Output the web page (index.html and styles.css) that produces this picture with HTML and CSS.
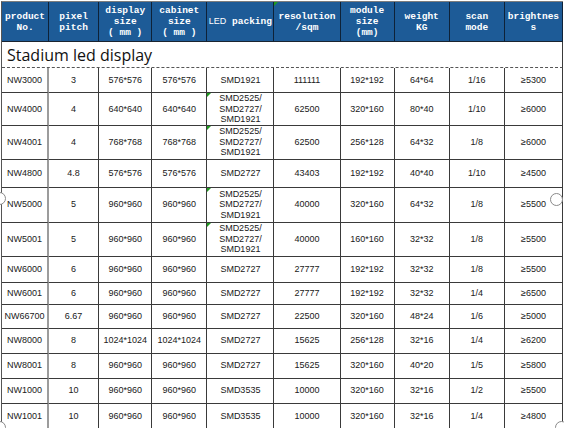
FILE: index.html
```html
<!DOCTYPE html>
<html>
<head>
<meta charset="utf-8">
<link rel="stylesheet" href="styles.css">
</head>
<body>
<div class="sheet">
<table class="spec">
  <colgroup>
    <col class="c1"><col class="c2"><col class="c3"><col class="c4"><col class="c5">
    <col class="c6"><col class="c7"><col class="c8"><col class="c9"><col class="c10">
  </colgroup>
  <thead>
    <tr class="r40">
      <th>product<br>No.</th>
      <th>pixel<br>pitch</th>
      <th>display<br>size<br>(&nbsp;mm&nbsp;)</th>
      <th>cabinet<br>size<br>(&nbsp;mm&nbsp;)</th>
      <th><span class="sans">LED</span> packing</th>
      <th class="tri">resolution<br>/sqm</th>
      <th>module<br>size<br>(mm)</th>
      <th>weight<br>KG</th>
      <th>scan<br>mode</th>
      <th>brightnes<br>s</th>
    </tr>
  </thead>
  <tbody>
    <tr class="r26 title"><td colspan="10">Stadium led display</td></tr>
    <tr class="r25"><td>NW3000</td><td>3</td><td>576*576</td><td>576*576</td><td>SMD1921</td><td>111111</td><td>192*192</td><td>64*64</td><td>1/16</td><td>≥5300</td></tr>
    <tr class="r31"><td>NW4000</td><td>4</td><td>640*640</td><td>640*640</td><td class="tri">SMD2525/<br>SMD2727/<br>SMD1921</td><td>62500</td><td>320*160</td><td>80*40</td><td>1/10</td><td>≥6000</td></tr>
    <tr class="r34"><td>NW4001</td><td>4</td><td>768*768</td><td>768*768</td><td class="tri">SMD2525/<br>SMD2727/<br>SMD1921</td><td>62500</td><td>256*128</td><td>64*32</td><td>1/8</td><td>≥6000</td></tr>
    <tr class="r28"><td>NW4800</td><td>4.8</td><td>576*576</td><td>576*576</td><td>SMD2727</td><td>43403</td><td>192*192</td><td>40*40</td><td>1/10</td><td>≥4500</td></tr>
    <tr class="r35"><td>NW5000</td><td>5</td><td>960*960</td><td>960*960</td><td class="tri">SMD2525/<br>SMD2727/<br>SMD1921</td><td>40000</td><td>320*160</td><td>64*32</td><td>1/8</td><td>≥5500</td></tr>
    <tr class="r34"><td>NW5001</td><td>5</td><td>960*960</td><td>960*960</td><td class="tri">SMD2525/<br>SMD2727/<br>SMD1921</td><td>40000</td><td>160*160</td><td>32*32</td><td>1/8</td><td>≥5500</td></tr>
    <tr class="r26"><td>NW6000</td><td>6</td><td>960*960</td><td>960*960</td><td>SMD2727</td><td>27777</td><td>192*192</td><td>32*32</td><td>1/8</td><td>≥5500</td></tr>
    <tr class="r22"><td>NW6001</td><td>6</td><td>960*960</td><td>960*960</td><td>SMD2727</td><td>27777</td><td>192*192</td><td>32*32</td><td>1/4</td><td>≥6500</td></tr>
    <tr class="r24"><td>NW66700</td><td>6.67</td><td>960*960</td><td>960*960</td><td>SMD2727</td><td>22500</td><td>320*160</td><td>48*24</td><td>1/6</td><td>≥5000</td></tr>
    <tr class="r25"><td>NW8000</td><td>8</td><td>1024*1024</td><td>1024*1024</td><td>SMD2727</td><td>15625</td><td>256*128</td><td>32*16</td><td>1/4</td><td>≥6200</td></tr>
    <tr class="r25"><td>NW8001</td><td>8</td><td>960*960</td><td>960*960</td><td>SMD2727</td><td>15625</td><td>320*160</td><td>40*20</td><td>1/5</td><td>≥5800</td></tr>
    <tr class="r25"><td>NW1000</td><td>10</td><td>960*960</td><td>960*960</td><td>SMD3535</td><td>10000</td><td>320*160</td><td>32*16</td><td>1/2</td><td>≥5500</td></tr>
    <tr class="r26"><td>NW1001</td><td>10</td><td>960*960</td><td>960*960</td><td>SMD3535</td><td>10000</td><td>320*160</td><td>32*16</td><td>1/4</td><td>≥4800</td></tr>
  </tbody>
</table>
<span class="handle h-left"></span>
<span class="handle h-right"></span>
<span class="handle h-bl"></span>
<span class="handle h-br"></span>
</div>
</body>
</html>
```

FILE: styles.css
```css
html, body {
  margin: 0;
  padding: 0;
  background: #ffffff;
  overflow: hidden;
}

.sheet {
  position: relative;
  width: 564px;
  height: 428px;
  padding-top: 1px;
  padding-left: 1px;
  box-sizing: border-box;
}

.spec {
  border-collapse: separate;
  border-spacing: 0;
  table-layout: fixed;
  width: 562px;
  border-top: 1px solid #7d7d7d;
  border-left: 1px solid #555;
  font-family: "Liberation Sans", Arial, sans-serif;
}

.c1 { width: 47px; }
.c2 { width: 50px; }
.c3 { width: 53px; }
.c4 { width: 55px; }
.c5 { width: 67px; }
.c6 { width: 66px; }
.c7 { width: 54px; }
.c8 { width: 55px; }
.c9 { width: 55px; }
.c10 { width: 58px; }

.r22 { height: 22px; }
.r24 { height: 24px; }
.r25 { height: 25px; }
.r26 { height: 26px; }
.r28 { height: 28px; }
.r31 { height: 31px; }
.r34 { height: 34px; }
.r35 { height: 35px; }
.r40 { height: 40px; }

th {
  background: #1d5b97;
  color: #ffffff;
  font-family: "Liberation Mono", "DejaVu Sans Mono", monospace;
  font-weight: bold;
  font-size: 9.5px;
  line-height: 11px;
  padding: 0;
  text-align: center;
  vertical-align: middle;
  border-right: 1px solid #0e2238;
  border-bottom: 1px solid #1a2430;
  box-sizing: border-box;
  white-space: nowrap;
}

th .sans {
  font-family: "Liberation Sans", Arial, sans-serif;
  font-weight: normal;
  font-size: 9px;
}

td {
  padding: 0;
  text-align: center;
  vertical-align: middle;
  font-size: 9px;
  line-height: 10.5px;
  color: #202020;
  border-right: 1px solid #3a3a3a;
  border-bottom: 1px solid #3a3a3a;
  box-sizing: border-box;
  white-space: nowrap;
}

td:first-child {
  border-right: 2px solid #9c9c9c;
}

.title td {
  text-align: left;
  padding-left: 5px;
  font-family: "Open Sans", "Noto Sans", sans-serif;
  font-size: 16px;
  line-height: 20px;
  color: #111;
  border-right: 1px solid #3a3a3a;
  border-bottom: 1px dashed #555;
}

.tri {
  position: relative;
}

.tri::before {
  content: "";
  position: absolute;
  left: 0;
  top: 0;
  border-top: 4px solid #1f9a1f;
  border-right: 4px solid transparent;
}

.handle {
  position: absolute;
  width: 13px;
  height: 13px;
  border-radius: 50%;
  border: 1px solid #8a8a8a;
  background: #ffffff;
  box-sizing: border-box;
}

.h-left { left: -7px; top: 192px; }
.h-right { left: 550px; top: 193px; }
.h-bl { left: -7px; top: 421px; }
.h-br { left: 555px; top: 421px; }
```
